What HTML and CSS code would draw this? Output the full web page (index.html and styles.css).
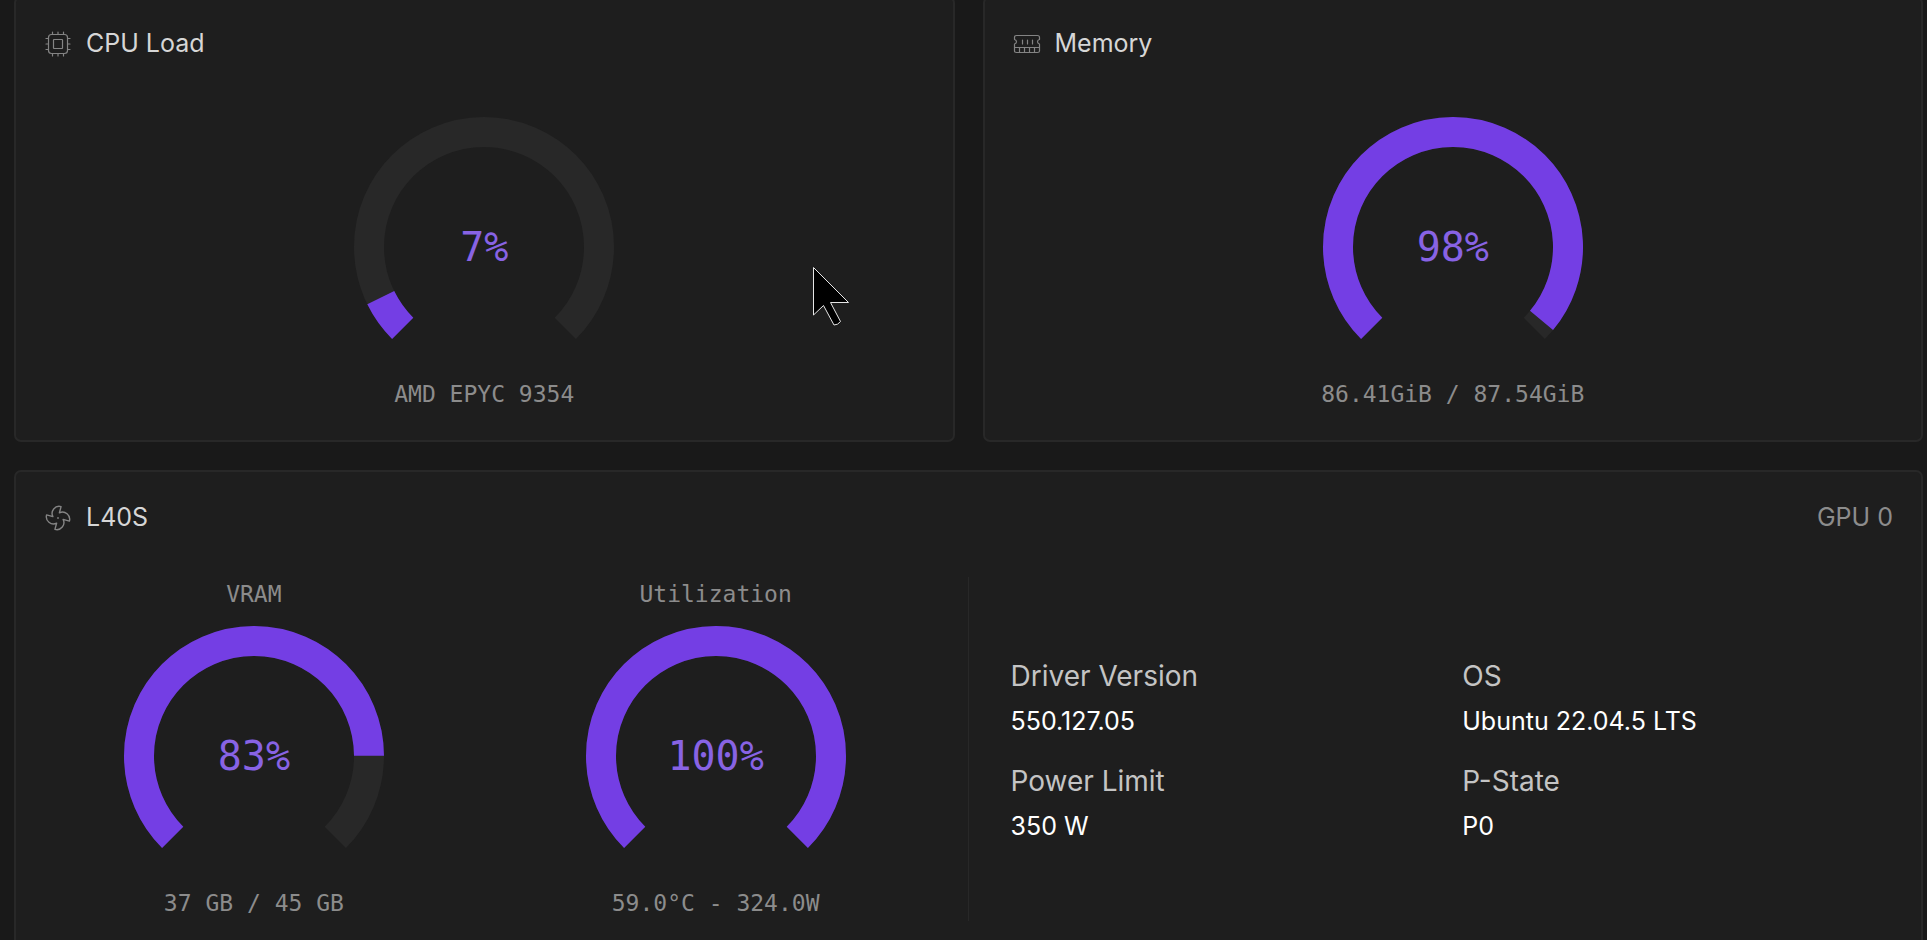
FILE: index.html
```html
<!DOCTYPE html>
<html lang="en">
<head>
<meta charset="utf-8">
<meta name="viewport" content="width=device-width, initial-scale=1">
<title>System monitor</title>
<link rel="stylesheet" href="styles.css">
</head>
<body>
<main class="dashboard">
  <section class="card">
    <header class="card-header">
      <svg class="icon" viewBox="0 0 28 28" aria-hidden="true">
        <rect x="4.500" y="4.500" width="19" height="19" rx="3"/>
        <rect x="9.500" y="9.500" width="9" height="9" rx="0.5"/>
        <path d="M8.500 4.500V2M14 4.500V2M19.500 4.500V2M8.500 23.500V26M14 23.500V26M19.500 23.500V26M4.500 8.500H2M4.500 14H2M4.500 19.500H2M23.500 8.500H26M23.500 14H26M23.500 19.500H26"/>
      </svg>
      <h2 class="card-title">CPU Load</h2>
    </header>
    <div class="card-body">
      <div class="meter">
        <div class="gauge">
          <svg class="gauge-ring" viewBox="0 0 260 260" aria-hidden="true">
            <path class="ring-track" d="M48.683 211.317A115 115 0 1 1 211.317 211.317"/>
            <path class="ring-fill" pathLength="100" stroke-dasharray="7 200" d="M48.683 211.317A115 115 0 1 1 211.317 211.317"/>
          </svg>
          <span class="gauge-value">7%</span>
        </div>
        <p class="meter-text">AMD EPYC 9354</p>
      </div>
    </div>
  </section>

  <section class="card">
    <header class="card-header">
      <svg class="icon" viewBox="0 0 28 28" aria-hidden="true">
        <path d="M3.500 5.500H24.500Q26.500 5.500 26.500 7.500V9.500Q24.500 10 24.500 11.800T26.500 14V21Q26.500 22.500 24.500 22.500H3.500Q1.500 22.500 1.500 21V14Q3.500 13.500 3.500 11.800T1.500 9.500V7.500Q1.500 5.500 3.500 5.500Z"/>
        <path d="M1.500 17.500H26.500M6.500 17.500V22.500M11.500 17.500V22.500M16.500 17.500V22.500M21.500 17.500V22.500M9.500 10V14M14.500 10V14M19.500 10V14"/>
      </svg>
      <h2 class="card-title">Memory</h2>
    </header>
    <div class="card-body">
      <div class="meter">
        <div class="gauge">
          <svg class="gauge-ring" viewBox="0 0 260 260" aria-hidden="true">
            <path class="ring-track" d="M48.683 211.317A115 115 0 1 1 211.317 211.317"/>
            <path class="ring-fill" pathLength="100" stroke-dasharray="98 200" d="M48.683 211.317A115 115 0 1 1 211.317 211.317"/>
          </svg>
          <span class="gauge-value">98%</span>
        </div>
        <p class="meter-text">86.41GiB / 87.54GiB</p>
      </div>
    </div>
  </section>

  <section class="card card-wide">
    <header class="card-header">
      <svg class="icon" viewBox="0 0 24 24" aria-hidden="true">
        <path d="M10.827 16.379a6.082 6.082 0 0 1-8.618-7.002l5.412 1.450a6.082 6.082 0 0 1 7.002-8.618l-1.450 5.412a6.082 6.082 0 0 1 8.618 7.002l-5.412-1.450a6.082 6.082 0 0 1-7.002 8.618l1.450-5.412Z"/>
        <path d="M11.700 12h.600"/>
      </svg>
      <h2 class="card-title">L40S</h2>
      <span class="card-tag">GPU 0</span>
    </header>
    <div class="card-body gpu">
      <div class="gpu-meters">
        <div class="meter">
          <h3 class="meter-text">VRAM</h3>
          <div class="gauge">
            <svg class="gauge-ring" viewBox="0 0 260 260" aria-hidden="true">
              <path class="ring-track" d="M48.683 211.317A115 115 0 1 1 211.317 211.317"/>
              <path class="ring-fill" pathLength="100" stroke-dasharray="83.300 200" d="M48.683 211.317A115 115 0 1 1 211.317 211.317"/>
            </svg>
            <span class="gauge-value">83%</span>
          </div>
          <p class="meter-text">37 GB / 45 GB</p>
        </div>
        <div class="meter">
          <h3 class="meter-text">Utilization</h3>
          <div class="gauge">
            <svg class="gauge-ring" viewBox="0 0 260 260" aria-hidden="true">
              <path class="ring-track" d="M48.683 211.317A115 115 0 1 1 211.317 211.317"/>
              <path class="ring-fill" d="M48.683 211.317A115 115 0 1 1 211.317 211.317"/>
            </svg>
            <span class="gauge-value">100%</span>
          </div>
          <p class="meter-text">59.0°C - 324.0W</p>
        </div>
      </div>
      <dl class="specs">
        <div class="spec"><dt>Driver Version</dt><dd>550.127.05</dd></div>
        <div class="spec"><dt>OS</dt><dd>Ubuntu 22.04.5 LTS</dd></div>
        <div class="spec"><dt>Power Limit</dt><dd>350 W</dd></div>
        <div class="spec"><dt>P-State</dt><dd>P0</dd></div>
      </dl>
    </div>
  </section>
</main>
<svg class="pointer" viewBox="0 0 38 62" aria-hidden="true">
  <path d="M1.500 1.500L36.500 36.500H18.500L28.500 55.500Q26 59 22 59L11.500 39.500L1.500 49Z"/>
</svg>
</body>
</html>
```
FILE: styles.css
```css
* {
  box-sizing: border-box;
  margin: 0;
  padding: 0;
}

html {
  overflow: hidden;
}

body {
  background: #191919;
  color: #d6d6d6;
  font-family: Inter, "Liberation Sans", sans-serif;
  font-size: 25px;
  line-height: 35px;
}

.dashboard {
  display: grid;
  grid-template-columns: 1fr 1fr;
  gap: 28px;
  margin-top: -4px;
  padding: 0 4px 28px 14px;
}

.card {
  padding: 28px;
  background: #1e1e1e;
  border: 2px solid #282828;
  border-radius: 7px;
}

.card-wide {
  grid-column: 1 / -1;
}

.card-header {
  display: flex;
  align-items: center;
  gap: 14px;
}

.icon {
  width: 28px;
  height: 28px;
  fill: none;
  stroke: #848484;
  stroke-width: 1.2;
  stroke-linejoin: round;
  stroke-linecap: round;
}

.card-title {
  font-size: 25px;
  font-weight: 400;
}

.card-tag {
  margin-left: auto;
  color: #8c8c8c;
}

.card-body {
  margin-top: 42px;
}

.meter {
  display: flex;
  flex-direction: column;
  align-items: center;
}

.meter-text {
  color: #8c8c8c;
  font-family: "DejaVu Sans Mono", "Liberation Mono", monospace;
  font-size: 23px;
  font-weight: 400;
}

.gauge {
  display: grid;
  place-items: center;
  margin-top: 14px;
}

.gauge-ring,
.gauge-value {
  grid-area: 1 / 1;
}

.gauge-ring {
  width: 260px;
  height: 260px;
  fill: none;
  stroke-width: 30;
}

.ring-track {
  stroke: #282828;
}

.ring-fill {
  stroke: #743ee4;
}

.gauge-value {
  color: #8863e4;
  font-family: "DejaVu Sans Mono", "Liberation Mono", monospace;
  font-size: 40px;
}

.gpu {
  display: grid;
  grid-template-columns: 1fr 1fr;
}

.gpu-meters {
  display: grid;
  grid-template-columns: 1fr 1fr;
  gap: 42px;
  padding-right: 42px;
  border-right: 1px solid #282828;
}

.specs {
  display: grid;
  grid-template-columns: 1fr 1fr;
  align-content: center;
  gap: 21px;
  padding-left: 42px;
}

.spec {
  display: grid;
  gap: 7px;
}

.spec dt {
  color: #c4c4c4;
  font-size: 28px;
  line-height: 42px;
}

.spec dd {
  color: #fff;
}

.pointer {
  position: absolute;
  top: 266px;
  left: 812px;
  width: 38px;
  height: 62px;
  fill: #000;
  stroke: #e6e6e6;
  stroke-width: 1;
}
```
